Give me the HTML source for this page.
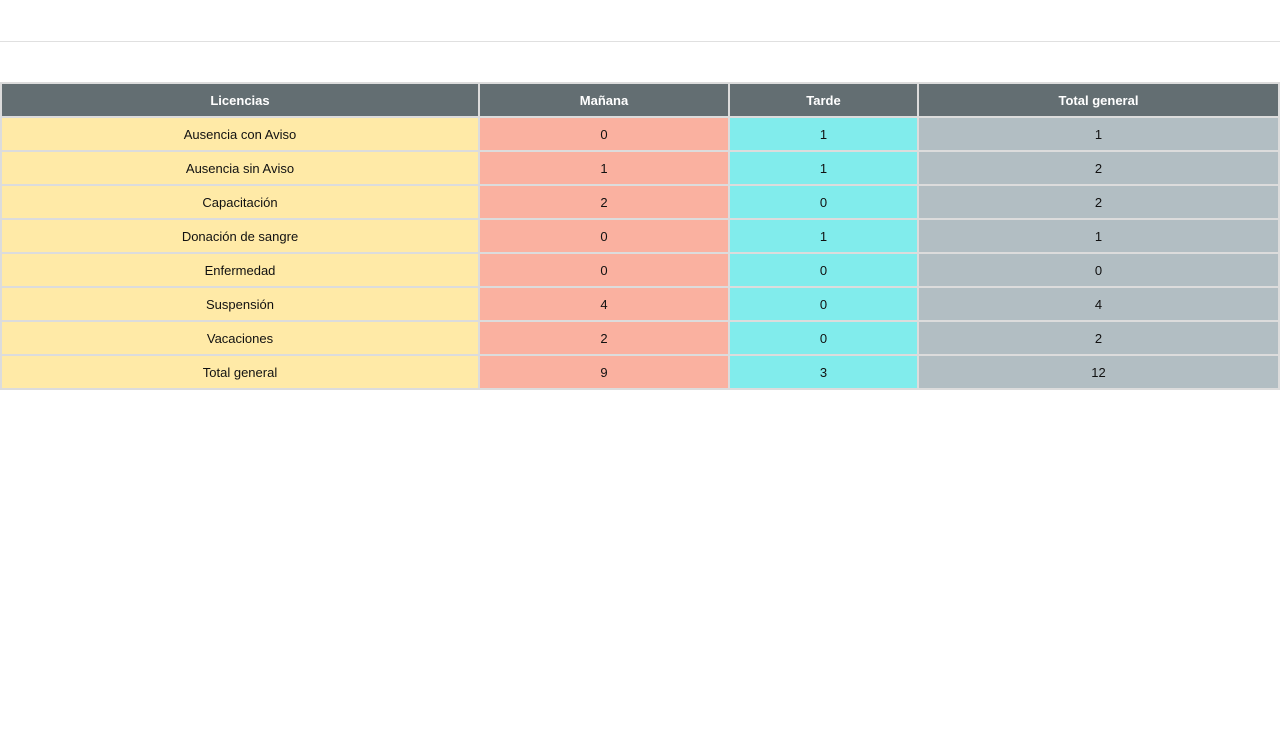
<!DOCTYPE html>
<html><head><meta charset="utf-8"><style>
body{margin:0;background:#fff;width:1280px;height:732px;overflow:hidden;font-family:"Liberation Sans",sans-serif;font-size:13px;}
.top{position:absolute;left:0;top:41px;width:1280px;height:1px;background:#e0e0e0;}
.g{position:absolute;left:0;top:82px;width:1276px;padding:2px;background:#dcdcdc;display:grid;grid-template-columns:476px 248px 187px 359px;grid-auto-rows:32px;gap:2px;}
.g div{display:flex;align-items:center;justify-content:center;color:#111;}
.h{background:#636e72;color:#fff!important;font-weight:bold;}
.a{background:#ffeaa7}.b{background:#fab1a0}.c{background:#81ecec}.d{background:#b2bec3}
</style></head><body>
<div class="top"></div>
<div class="g">
<div class="h">Licencias</div><div class="h">Mañana</div><div class="h">Tarde</div><div class="h">Total general</div>
<div class="a">Ausencia con Aviso</div><div class="b">0</div><div class="c">1</div><div class="d">1</div>
<div class="a">Ausencia sin Aviso</div><div class="b">1</div><div class="c">1</div><div class="d">2</div>
<div class="a">Capacitación</div><div class="b">2</div><div class="c">0</div><div class="d">2</div>
<div class="a">Donación de sangre</div><div class="b">0</div><div class="c">1</div><div class="d">1</div>
<div class="a">Enfermedad</div><div class="b">0</div><div class="c">0</div><div class="d">0</div>
<div class="a">Suspensión</div><div class="b">4</div><div class="c">0</div><div class="d">4</div>
<div class="a">Vacaciones</div><div class="b">2</div><div class="c">0</div><div class="d">2</div>
<div class="a">Total general</div><div class="b">9</div><div class="c">3</div><div class="d">12</div>
</div>
</body></html>
